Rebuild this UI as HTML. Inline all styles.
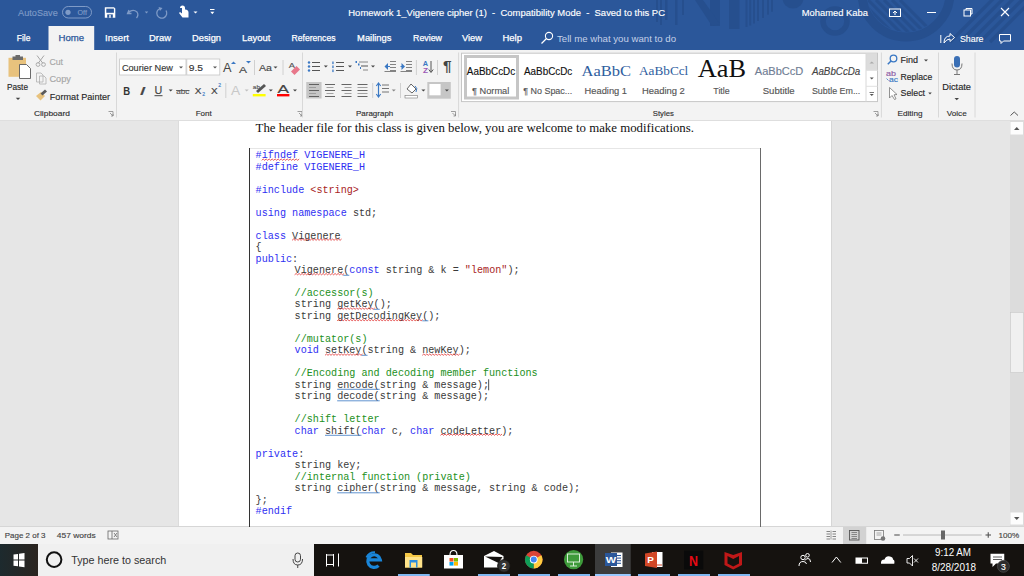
<!DOCTYPE html>
<html><head><meta charset="utf-8"><style>*{margin:0;padding:0}html,body{width:1024px;height:576px;overflow:hidden;background:#e6e6e6}svg{display:block}</style></head><body>
<svg width="1024" height="576" viewBox="0 0 1024 576">
<rect x="0" y="0" width="1024" height="50" fill="#2b579a" />
<rect x="0" y="50" width="1024" height="70" fill="#f3f3f3" />
<rect x="0" y="120" width="1024" height="407" fill="#e6e6e6" />
<rect x="179" y="120" width="652" height="407" fill="#ffffff" />
<rect x="0" y="120" width="1024" height="1" fill="#dedede" />
<rect x="0" y="526" width="1024" height="18" fill="#f3f3f3" />
<rect x="0" y="526" width="1024" height="1" fill="#d6d6d6" />
<rect x="0" y="544" width="1024" height="32" fill="#15120f" />
<rect x="656" y="0" width="2" height="22" fill="#264f8e" />
<rect x="660" y="0" width="2" height="25" fill="#264f8e" />
<rect x="665" y="0" width="2.5" height="20" fill="#264f8e" />
<rect x="675" y="0" width="2.5" height="25" fill="#264f8e" />
<rect x="682" y="0" width="2" height="15" fill="#264f8e" />
<rect x="710" y="0" width="10" height="26" fill="#264f8e" />
<rect x="729" y="0" width="10.5" height="29" fill="#264f8e" />
<rect x="745.5" y="0" width="2" height="27" fill="#264f8e" />
<rect x="749.2" y="0" width="2" height="25.5" fill="#264f8e" />
<rect x="753" y="0" width="2" height="23.5" fill="#264f8e" />
<rect x="757" y="0" width="2" height="21" fill="#264f8e" />
<rect x="762" y="0" width="2" height="18" fill="#264f8e" />
<rect x="767" y="0" width="2" height="14.6" fill="#264f8e" />
<rect x="771" y="0" width="2" height="11.7" fill="#264f8e" />
<path d="M695 0 L703 0 L720 24 L712 26 Z" fill="#264f8e" stroke="none" stroke-width="1" />
<circle cx="793" cy="-2" r="10.5" fill="#264f8e"/>
<circle cx="835" cy="21" r="12" fill="none" stroke="#264f8e" stroke-width="5.5"/>
<defs><clipPath id="ic"><circle cx="906" cy="-7" r="39"/></clipPath></defs>
<circle cx="906" cy="-7" r="44" fill="none" stroke="#264f8e" stroke-width="9"/>
<g clip-path="url(#ic)">
<line x1="860" y1="0" x2="900" y2="40" stroke="#264f8e" stroke-width="3" />
<line x1="868" y1="0" x2="908" y2="40" stroke="#264f8e" stroke-width="3" />
<line x1="876" y1="0" x2="916" y2="40" stroke="#264f8e" stroke-width="3" />
<line x1="884" y1="0" x2="924" y2="40" stroke="#264f8e" stroke-width="3" />
<line x1="892" y1="0" x2="932" y2="40" stroke="#264f8e" stroke-width="3" />
<line x1="900" y1="0" x2="940" y2="40" stroke="#264f8e" stroke-width="3" />
</g>
<line x1="950" y1="42" x2="995" y2="-3" stroke="#264f8e" stroke-width="3.2" />
<line x1="960" y1="42" x2="1005" y2="-3" stroke="#264f8e" stroke-width="3.2" />
<line x1="970" y1="42" x2="1015" y2="-3" stroke="#264f8e" stroke-width="3.2" />
<line x1="980" y1="42" x2="1025" y2="-3" stroke="#264f8e" stroke-width="3.2" />
<line x1="990" y1="42" x2="1035" y2="-3" stroke="#264f8e" stroke-width="3.2" />
<text x="18.10" y="15.80" font-family="Liberation Sans" font-size="9.29" fill="#7f9bc7" stroke="#7f9bc7" stroke-width="0.14" font-weight="normal" font-style="normal" textLength="39.70" lengthAdjust="spacingAndGlyphs" xml:space="preserve">AutoSave</text>
<rect x="62.5" y="6.5" width="29" height="11.5" rx="5.75" fill="none" stroke="#7f9bc7" stroke-width="1"/>
<circle cx="68" cy="12.3" r="2.6" fill="#7f9bc7"/>
<text x="77.60" y="14.80" font-family="Liberation Sans" font-size="6.57" fill="#7f9bc7" stroke="#7f9bc7" stroke-width="0.14" font-weight="normal" font-style="normal" textLength="9.30" lengthAdjust="spacingAndGlyphs" xml:space="preserve">Off</text>
<path d="M104.8 7.3 H114 L115.3 8.6 V17.8 H104.8 Z" fill="#fff" stroke="none" stroke-width="1" />
<rect x="106.3" y="8.6" width="7.6" height="4.2" fill="#2b579a" />
<rect x="107.2" y="14.4" width="5.6" height="3.4" fill="#2b579a" />
<rect x="109.3" y="14.9" width="1.4" height="2.9" fill="#fff" />
<path d="M129 10 L127.5 13.5 L131.5 13.5 M128.5 12.5 Q133 8.5 137 12 Q139 15 136.5 18" fill="none" stroke="#7f9bc7" stroke-width="1.3" />
<path d="M144.75 11.5 L148.25 11.5 L146.5 13.5 Z" fill="#7f9bc7" stroke="none" stroke-width="1" />
<path d="M166 10.5 A5 5 0 1 1 160 8.5" fill="none" stroke="#7f9bc7" stroke-width="1.3"/>
<path d="M158.5 7 L162.5 8 L160 11 Z" fill="#7f9bc7" stroke="none" stroke-width="1" />
<path d="M180 8 a2.5 2.5 0 0 1 5 0 v1.5 a3 3 0 0 1 3.5 3 v5 h-6 l-3.5 -4.5 l1 -1 l2 1.5 v-5.5" fill="#fff" stroke="none" stroke-width="1" />
<path d="M193.5 11.5 L197.5 11.5 L195.5 13.5 Z" fill="#fff" stroke="none" stroke-width="1" />
<rect x="210" y="9" width="4.5" height="1" fill="#fff" />
<path d="M210.3 11.75 L214.3 11.75 L212.3 14.25 Z" fill="#fff" stroke="none" stroke-width="1" />
<text x="348.30" y="15.80" font-family="Liberation Sans" font-size="9.29" fill="#fff" stroke="#fff" stroke-width="0.14" font-weight="normal" font-style="normal" textLength="316.70" lengthAdjust="spacingAndGlyphs" xml:space="preserve">Homework 1_Vigenere cipher (1)  -  Compatibility Mode  -  Saved to this PC</text>
<text x="801.80" y="15.80" font-family="Liberation Sans" font-size="9.29" fill="#fff" stroke="#fff" stroke-width="0.14" font-weight="normal" font-style="normal" textLength="66.20" lengthAdjust="spacingAndGlyphs" xml:space="preserve">Mohamed Kaba</text>
<rect x="889.5" y="9" width="11" height="7.5" fill="none" stroke="#fff" stroke-width="1"/>
<path d="M895 15 V11 M893 13 L895 11 L897 13" fill="none" stroke="#fff" stroke-width="1" />
<rect x="927" y="12" width="9" height="1" fill="#fff" />
<rect x="964" y="10" width="6.5" height="6" fill="none" stroke="#fff" stroke-width="1"/>
<path d="M966 10 V8.5 H972 V14 H970.5" fill="none" stroke="#fff" stroke-width="1" />
<path d="M1001 8 L1009 16 M1009 8 L1001 16" fill="none" stroke="#fff" stroke-width="1.1" />
<rect x="48.5" y="26" width="45.7" height="24" fill="#f3f3f3" />
<text x="16.80" y="40.80" font-family="Liberation Sans" font-size="9.43" fill="#ffffff" stroke="#ffffff" stroke-width="0.25" font-weight="normal" font-style="normal" textLength="13.50" lengthAdjust="spacingAndGlyphs" xml:space="preserve">File</text>
<text x="58.60" y="40.80" font-family="Liberation Sans" font-size="9.43" fill="#2b579a" stroke="#2b579a" stroke-width="0.25" font-weight="normal" font-style="normal" textLength="25.60" lengthAdjust="spacingAndGlyphs" xml:space="preserve">Home</text>
<text x="105.00" y="40.80" font-family="Liberation Sans" font-size="9.43" fill="#ffffff" stroke="#ffffff" stroke-width="0.25" font-weight="normal" font-style="normal" textLength="24.00" lengthAdjust="spacingAndGlyphs" xml:space="preserve">Insert</text>
<text x="149.00" y="40.80" font-family="Liberation Sans" font-size="9.43" fill="#ffffff" stroke="#ffffff" stroke-width="0.25" font-weight="normal" font-style="normal" textLength="22.00" lengthAdjust="spacingAndGlyphs" xml:space="preserve">Draw</text>
<text x="192.00" y="40.80" font-family="Liberation Sans" font-size="9.43" fill="#ffffff" stroke="#ffffff" stroke-width="0.25" font-weight="normal" font-style="normal" textLength="29.00" lengthAdjust="spacingAndGlyphs" xml:space="preserve">Design</text>
<text x="242.00" y="40.80" font-family="Liberation Sans" font-size="9.43" fill="#ffffff" stroke="#ffffff" stroke-width="0.25" font-weight="normal" font-style="normal" textLength="28.50" lengthAdjust="spacingAndGlyphs" xml:space="preserve">Layout</text>
<text x="291.50" y="40.80" font-family="Liberation Sans" font-size="9.43" fill="#ffffff" stroke="#ffffff" stroke-width="0.25" font-weight="normal" font-style="normal" textLength="44.00" lengthAdjust="spacingAndGlyphs" xml:space="preserve">References</text>
<text x="357.10" y="40.80" font-family="Liberation Sans" font-size="9.43" fill="#ffffff" stroke="#ffffff" stroke-width="0.25" font-weight="normal" font-style="normal" textLength="34.40" lengthAdjust="spacingAndGlyphs" xml:space="preserve">Mailings</text>
<text x="413.00" y="40.80" font-family="Liberation Sans" font-size="9.43" fill="#ffffff" stroke="#ffffff" stroke-width="0.25" font-weight="normal" font-style="normal" textLength="29.00" lengthAdjust="spacingAndGlyphs" xml:space="preserve">Review</text>
<text x="462.00" y="40.80" font-family="Liberation Sans" font-size="9.43" fill="#ffffff" stroke="#ffffff" stroke-width="0.25" font-weight="normal" font-style="normal" textLength="20.00" lengthAdjust="spacingAndGlyphs" xml:space="preserve">View</text>
<text x="502.50" y="40.80" font-family="Liberation Sans" font-size="9.43" fill="#ffffff" stroke="#ffffff" stroke-width="0.25" font-weight="normal" font-style="normal" textLength="19.50" lengthAdjust="spacingAndGlyphs" xml:space="preserve">Help</text>
<circle cx="549" cy="36" r="3.6" fill="none" stroke="#fff" stroke-width="1.1"/>
<line x1="546.5" y1="38.5" x2="541.5" y2="43.5" stroke="#fff" stroke-width="1.3" />
<text x="557.00" y="41.50" font-family="Liberation Sans" font-size="9.43" fill="#c5d1e8" font-weight="normal" font-style="normal" textLength="119.00" lengthAdjust="spacingAndGlyphs" xml:space="preserve">Tell me what you want to do</text>
<path d="M940.8 35 V43" fill="none" stroke="#fff" stroke-width="1" />
<path d="M944 43 Q944 36 950 36 V33.5 L954.5 37.5 L950 41.5 V39 Q946.5 39 944 43 Z" fill="none" stroke="#fff" stroke-width="1" />
<text x="960.00" y="41.50" font-family="Liberation Sans" font-size="9.43" fill="#fff" stroke="#fff" stroke-width="0.14" font-weight="normal" font-style="normal" textLength="23.50" lengthAdjust="spacingAndGlyphs" xml:space="preserve">Share</text>
<path d="M999.5 34.5 H1010.5 V41 H1003.5 L1001 43.5 V41 H999.5 Z" fill="none" stroke="#fff" stroke-width="1" />
<rect x="8.5" y="57.8" width="17.5" height="19" fill="#e8c27d" />
<rect x="12.5" y="56.5" width="10.5" height="3.5" fill="#6b6b6b" />
<rect x="15.5" y="55" width="4.5" height="2.5" fill="#6b6b6b" />
<path d="M19.5 64.5 H26.5 L30.5 68.5 V78.5 H19.5 Z" fill="#fff" stroke="#5a5a5a" stroke-width="0.9" />
<text x="6.90" y="89.80" font-family="Liberation Sans" font-size="9.00" fill="#262626" stroke="#262626" stroke-width="0.14" font-weight="normal" font-style="normal" textLength="21.10" lengthAdjust="spacingAndGlyphs" xml:space="preserve">Paste</text>
<path d="M15.75 97.7 L20.25 97.7 L18 99.89999999999999 Z" fill="#444" stroke="none" stroke-width="1" />
<path d="M37 55.5 L43 63.5 M44 55.5 L38 63.5" fill="none" stroke="#a6a6a6" stroke-width="1" />
<circle cx="38" cy="64.5" r="1.9" fill="none" stroke="#a6a6a6" stroke-width="0.9"/><circle cx="43.5" cy="64.5" r="1.9" fill="none" stroke="#a6a6a6" stroke-width="0.9"/>
<text x="49.40" y="64.80" font-family="Liberation Sans" font-size="8.71" fill="#a6a6a6" stroke="#a6a6a6" stroke-width="0.14" font-weight="normal" font-style="normal" textLength="13.60" lengthAdjust="spacingAndGlyphs" xml:space="preserve">Cut</text>
<path d="M36.5 73 H41 L43 75 V82 H36.5 Z M39.5 76 H44 L46 78 V84 H39.5 Z" fill="#f3f3f3" stroke="#b0b0b0" stroke-width="0.8" />
<text x="49.40" y="82.20" font-family="Liberation Sans" font-size="8.71" fill="#a6a6a6" stroke="#a6a6a6" stroke-width="0.14" font-weight="normal" font-style="normal" textLength="21.60" lengthAdjust="spacingAndGlyphs" xml:space="preserve">Copy</text>
<path d="M36 96 L41 92 L45 96 L40.5 100.5 Z" fill="#e8c27d" stroke="none" stroke-width="1" />
<path d="M40.5 93.5 L45 89.5 L47 91.5 L42.5 95.5 Z" fill="#5b5b5b" stroke="none" stroke-width="1" />
<text x="49.80" y="99.80" font-family="Liberation Sans" font-size="9.71" fill="#262626" stroke="#262626" stroke-width="0.14" font-weight="normal" font-style="normal" textLength="60.30" lengthAdjust="spacingAndGlyphs" xml:space="preserve">Format Painter</text>
<text x="33.90" y="116.00" font-family="Liberation Sans" font-size="8.00" fill="#303030" stroke="#303030" stroke-width="0.14" font-weight="normal" font-style="normal" textLength="36.10" lengthAdjust="spacingAndGlyphs" xml:space="preserve">Clipboard</text>
<path d="M108.5 111.5 H113.0 V116.0 M110.0 113.0 L113.0 116.0 M111.0 116.0 H113.0 V114.0" fill="none" stroke="#888" stroke-width="0.8" />
<line x1="116.5" y1="52.5" x2="116.5" y2="117.5" stroke="#d8d8d8" stroke-width="1" />
<rect x="119.6" y="59" width="66.4" height="16" fill="#fff" stroke="#c6c6c6" stroke-width="0.8"/>
<rect x="186.8" y="59" width="33" height="16" fill="#fff" stroke="#c6c6c6" stroke-width="0.8"/>
<text x="121.90" y="71.20" font-family="Liberation Sans" font-size="9.57" fill="#333" stroke="#333" stroke-width="0.14" font-weight="normal" font-style="normal" textLength="51.00" lengthAdjust="spacingAndGlyphs" xml:space="preserve">Courier New</text>
<path d="M179.0 66.5 L183.0 66.5 L181 68.5 Z" fill="#555" stroke="none" stroke-width="1" />
<text x="188.70" y="71.20" font-family="Liberation Sans" font-size="9.57" fill="#333" stroke="#333" stroke-width="0.14" font-weight="normal" font-style="normal" textLength="14.30" lengthAdjust="spacingAndGlyphs" xml:space="preserve">9.5</text>
<path d="M213.0 66.5 L217.0 66.5 L215 68.5 Z" fill="#555" stroke="none" stroke-width="1" />
<text x="223.00" y="72.00" font-family="Liberation Sans" font-size="12.14" fill="#444" font-weight="normal" font-style="normal" textLength="8.50" lengthAdjust="spacingAndGlyphs" xml:space="preserve">A</text>
<path d="M231 64 L233.5 61.5 L236 64 Z" fill="#3a78c4" stroke="none" stroke-width="1" />
<text x="239.00" y="72.50" font-family="Liberation Sans" font-size="9.71" fill="#444" stroke="#444" stroke-width="0.14" font-weight="normal" font-style="normal" textLength="8.00" lengthAdjust="spacingAndGlyphs" xml:space="preserve">A</text>
<path d="M246 61 L248.5 63.5 L251 61 Z" fill="#3a78c4" stroke="none" stroke-width="1" />
<line x1="254.5" y1="60" x2="254.5" y2="75" stroke="#d0d0d0" stroke-width="1" />
<text x="259.00" y="71.20" font-family="Liberation Sans" font-size="9.71" fill="#444" stroke="#444" stroke-width="0.14" font-weight="normal" font-style="normal" textLength="13.00" lengthAdjust="spacingAndGlyphs" xml:space="preserve">Aa</text>
<path d="M273.5 66.5 L277.5 66.5 L275.5 68.5 Z" fill="#444" stroke="none" stroke-width="1" />
<line x1="283" y1="60" x2="283" y2="75" stroke="#d0d0d0" stroke-width="1" />
<text x="288.80" y="68.00" font-family="Liberation Sans" font-size="7.86" fill="#555" stroke="#555" stroke-width="0.14" font-weight="normal" font-style="normal" textLength="6.20" lengthAdjust="spacingAndGlyphs" xml:space="preserve">A</text>
<path d="M291 71.5 L296.5 66 L300 69.5 L294.5 75 Z" fill="#e8778a" stroke="none" stroke-width="1" />
<text x="123.30" y="94.50" font-family="Liberation Sans" font-size="10.00" fill="#333" font-weight="bold" font-style="normal" textLength="6.90" lengthAdjust="spacingAndGlyphs" xml:space="preserve">B</text>
<text x="139.50" y="94.50" font-family="Liberation Sans" font-size="10.00" fill="#444" stroke="#444" stroke-width="0.14" font-weight="normal" font-style="italic" textLength="6.10" lengthAdjust="spacingAndGlyphs" xml:space="preserve">I</text>
<text x="154.50" y="93.50" font-family="Liberation Sans" font-size="10.00" fill="#444" stroke="#444" stroke-width="0.14" font-weight="normal" font-style="normal" textLength="7.80" lengthAdjust="spacingAndGlyphs" xml:space="preserve">U</text>
<line x1="154.5" y1="95.7" x2="162.5" y2="95.7" stroke="#444" stroke-width="1" />
<path d="M168.7 89.5 L172.7 89.5 L170.7 91.5 Z" fill="#444" stroke="none" stroke-width="1" />
<text x="176.20" y="94.00" font-family="Liberation Sans" font-size="7.86" fill="#555" stroke="#555" stroke-width="0.14" font-weight="normal" font-style="normal" textLength="13.00" lengthAdjust="spacingAndGlyphs" xml:space="preserve">abc</text>
<line x1="176" y1="90.5" x2="189.5" y2="90.5" stroke="#555" stroke-width="0.8" />
<text x="194.80" y="93.50" font-family="Liberation Sans" font-size="9.00" fill="#444" stroke="#444" stroke-width="0.14" font-weight="normal" font-style="normal" textLength="6.70" lengthAdjust="spacingAndGlyphs" xml:space="preserve">X</text>
<text x="202.20" y="96.30" font-family="Liberation Sans" font-size="4.57" fill="#3a78c4" stroke="#3a78c4" stroke-width="0.14" font-weight="normal" font-style="normal" textLength="2.80" lengthAdjust="spacingAndGlyphs" xml:space="preserve">2</text>
<text x="211.00" y="93.50" font-family="Liberation Sans" font-size="9.00" fill="#444" stroke="#444" stroke-width="0.14" font-weight="normal" font-style="normal" textLength="6.70" lengthAdjust="spacingAndGlyphs" xml:space="preserve">X</text>
<text x="218.20" y="87.00" font-family="Liberation Sans" font-size="4.57" fill="#3a78c4" stroke="#3a78c4" stroke-width="0.14" font-weight="normal" font-style="normal" textLength="2.80" lengthAdjust="spacingAndGlyphs" xml:space="preserve">2</text>
<line x1="225.8" y1="83" x2="225.8" y2="98" stroke="#d0d0d0" stroke-width="1" />
<text x="231.00" y="94.50" font-family="Liberation Sans" font-size="11.86" fill="#c8c8c8" font-weight="normal" font-style="normal" textLength="9.20" lengthAdjust="spacingAndGlyphs" xml:space="preserve">A</text>
<path d="M244.7 89.5 L248.7 89.5 L246.7 91.5 Z" fill="#c0c0c0" stroke="none" stroke-width="1" />
<text x="252.80" y="89.00" font-family="Liberation Sans" font-size="5.71" fill="#555" stroke="#555" stroke-width="0.14" font-weight="normal" font-style="normal" textLength="7.20" lengthAdjust="spacingAndGlyphs" xml:space="preserve">ab</text>
<path d="M256 91 L264 84 L266 86 L258 93 Z" fill="#555" stroke="none" stroke-width="1" />
<rect x="252.8" y="94" width="12.8" height="2.4" fill="#ffff00" />
<path d="M268.8 89.5 L272.8 89.5 L270.8 91.5 Z" fill="#444" stroke="none" stroke-width="1" />
<text x="277.50" y="93.00" font-family="Liberation Sans" font-size="10.71" fill="#444" stroke="#444" stroke-width="0.14" font-weight="normal" font-style="normal" textLength="11.50" lengthAdjust="spacingAndGlyphs" xml:space="preserve">A</text>
<rect x="277" y="94" width="12.4" height="2.4" fill="#ff0000" />
<path d="M293.0 89.5 L297.0 89.5 L295 91.5 Z" fill="#444" stroke="none" stroke-width="1" />
<text x="195.70" y="116.00" font-family="Liberation Sans" font-size="8.00" fill="#303030" stroke="#303030" stroke-width="0.14" font-weight="normal" font-style="normal" textLength="16.10" lengthAdjust="spacingAndGlyphs" xml:space="preserve">Font</text>
<path d="M297.5 111.5 H302.0 V116.0 M299.0 113.0 L302.0 116.0 M300.0 116.0 H302.0 V114.0" fill="none" stroke="#888" stroke-width="0.8" />
<line x1="302.5" y1="52.5" x2="302.5" y2="117.5" stroke="#d8d8d8" stroke-width="1" />
<circle cx="309" cy="62.5" r="1.2" fill="#3a78c4"/>
<circle cx="309" cy="66.5" r="1.2" fill="#3a78c4"/>
<circle cx="309" cy="70.5" r="1.2" fill="#3a78c4"/>
<line x1="312" y1="62.5" x2="320" y2="62.5" stroke="#555" stroke-width="1" />
<line x1="312" y1="66.5" x2="320" y2="66.5" stroke="#555" stroke-width="1" />
<line x1="312" y1="70.5" x2="320" y2="70.5" stroke="#555" stroke-width="1" />
<path d="M323.8 65.5 L327.8 65.5 L325.8 67.5 Z" fill="#444" stroke="none" stroke-width="1" />
<rect x="332.3" y="61.5" width="1.3" height="2.6" fill="#3a78c4" />
<rect x="332.3" y="65.5" width="1.3" height="2.6" fill="#3a78c4" />
<rect x="332.3" y="69.5" width="1.3" height="2.6" fill="#3a78c4" />
<line x1="336" y1="62.5" x2="344" y2="62.5" stroke="#555" stroke-width="1" />
<line x1="336" y1="66.5" x2="344" y2="66.5" stroke="#555" stroke-width="1" />
<line x1="336" y1="70.5" x2="344" y2="70.5" stroke="#555" stroke-width="1" />
<path d="M348.0 65.5 L352.0 65.5 L350 67.5 Z" fill="#444" stroke="none" stroke-width="1" />
<rect x="355.5" y="61" width="1.5" height="2" fill="#3a78c4" />
<rect x="358" y="63.5" width="1.5" height="2" fill="#3a78c4" />
<rect x="360" y="67" width="1" height="2" fill="#3a78c4" />
<line x1="359" y1="62" x2="368" y2="62" stroke="#888" stroke-width="1" />
<line x1="361" y1="66" x2="368" y2="66" stroke="#555" stroke-width="1" />
<line x1="363" y1="70" x2="368" y2="70" stroke="#888" stroke-width="1" />
<path d="M371.0 65.5 L375.0 65.5 L373 67.5 Z" fill="#444" stroke="none" stroke-width="1" />
<path d="M384.5 66.5 L388 63 V70 Z" fill="#3a78c4" stroke="none" stroke-width="1" />
<line x1="386" y1="66.5" x2="390" y2="66.5" stroke="#3a78c4" stroke-width="1" />
<line x1="390" y1="61.5" x2="396" y2="61.5" stroke="#666" stroke-width="0.8" />
<line x1="390" y1="64.5" x2="396" y2="64.5" stroke="#666" stroke-width="0.8" />
<line x1="390" y1="67.5" x2="396" y2="67.5" stroke="#666" stroke-width="0.8" />
<line x1="390" y1="70.5" x2="396" y2="70.5" stroke="#666" stroke-width="0.8" />
<line x1="384.5" y1="71.5" x2="396" y2="71.5" stroke="#666" stroke-width="0.8" />
<path d="M405 66.5 L401.5 63 V70 Z" fill="#3a78c4" stroke="none" stroke-width="1" />
<line x1="400.5" y1="66.5" x2="403" y2="66.5" stroke="#3a78c4" stroke-width="1" />
<line x1="406" y1="61.5" x2="412" y2="61.5" stroke="#666" stroke-width="0.8" />
<line x1="406" y1="64.5" x2="412" y2="64.5" stroke="#666" stroke-width="0.8" />
<line x1="406" y1="67.5" x2="412" y2="67.5" stroke="#666" stroke-width="0.8" />
<line x1="406" y1="70.5" x2="412" y2="70.5" stroke="#666" stroke-width="0.8" />
<line x1="400.5" y1="71.5" x2="412" y2="71.5" stroke="#666" stroke-width="0.8" />
<line x1="416.4" y1="60" x2="416.4" y2="75" stroke="#d0d0d0" stroke-width="1" />
<text x="422.70" y="66.00" font-family="Liberation Sans" font-size="6.29" fill="#3a78c4" font-weight="bold" font-style="normal" textLength="5.30" lengthAdjust="spacingAndGlyphs" xml:space="preserve">A</text>
<text x="423.00" y="72.50" font-family="Liberation Sans" font-size="6.29" fill="#9b59b6" font-weight="bold" font-style="normal" textLength="5.00" lengthAdjust="spacingAndGlyphs" xml:space="preserve">Z</text>
<line x1="431" y1="61" x2="431" y2="72" stroke="#555" stroke-width="1" />
<path d="M428.8 69.5 L431 72.5 L433.2 69.5" fill="none" stroke="#555" stroke-width="1" />
<line x1="437.5" y1="60" x2="437.5" y2="75" stroke="#d0d0d0" stroke-width="1" />
<text x="443.00" y="70.80" font-family="Liberation Sans" font-size="14.00" fill="#444" font-weight="bold" font-style="normal" textLength="8.60" lengthAdjust="spacingAndGlyphs" xml:space="preserve">¶</text>
<rect x="306.25" y="82" width="15.3" height="16.5" fill="#c6c6c6" />
<line x1="309" y1="84.5" x2="319" y2="84.5" stroke="#555" stroke-width="0.9" />
<line x1="309" y1="87.5" x2="316" y2="87.5" stroke="#999" stroke-width="0.9" />
<line x1="309" y1="90.5" x2="319" y2="90.5" stroke="#555" stroke-width="0.9" />
<line x1="309" y1="93.5" x2="316" y2="93.5" stroke="#999" stroke-width="0.9" />
<line x1="309" y1="96.5" x2="319" y2="96.5" stroke="#555" stroke-width="0.9" />
<line x1="325.0" y1="84.5" x2="335.0" y2="84.5" stroke="#555" stroke-width="0.9" />
<line x1="326.5" y1="87.5" x2="333.5" y2="87.5" stroke="#999" stroke-width="0.9" />
<line x1="325.0" y1="90.5" x2="335.0" y2="90.5" stroke="#555" stroke-width="0.9" />
<line x1="326.5" y1="93.5" x2="333.5" y2="93.5" stroke="#999" stroke-width="0.9" />
<line x1="325.0" y1="96.5" x2="335.0" y2="96.5" stroke="#555" stroke-width="0.9" />
<line x1="341.5" y1="84.5" x2="351.5" y2="84.5" stroke="#555" stroke-width="0.9" />
<line x1="344.5" y1="87.5" x2="351.5" y2="87.5" stroke="#999" stroke-width="0.9" />
<line x1="341.5" y1="90.5" x2="351.5" y2="90.5" stroke="#555" stroke-width="0.9" />
<line x1="344.5" y1="93.5" x2="351.5" y2="93.5" stroke="#999" stroke-width="0.9" />
<line x1="341.5" y1="96.5" x2="351.5" y2="96.5" stroke="#555" stroke-width="0.9" />
<line x1="357.5" y1="84.5" x2="367.5" y2="84.5" stroke="#555" stroke-width="0.9" />
<line x1="357.5" y1="87.5" x2="367.5" y2="87.5" stroke="#999" stroke-width="0.9" />
<line x1="357.5" y1="90.5" x2="367.5" y2="90.5" stroke="#555" stroke-width="0.9" />
<line x1="357.5" y1="93.5" x2="367.5" y2="93.5" stroke="#999" stroke-width="0.9" />
<line x1="357.5" y1="96.5" x2="367.5" y2="96.5" stroke="#555" stroke-width="0.9" />
<line x1="372.7" y1="83" x2="372.7" y2="98" stroke="#d0d0d0" stroke-width="1" />
<line x1="378.5" y1="84" x2="378.5" y2="96" stroke="#3a78c4" stroke-width="1.2" />
<path d="M376.3 86 L378.5 83 L380.7 86 M376.3 94 L378.5 97 L380.7 94" fill="none" stroke="#3a78c4" stroke-width="1.1" />
<line x1="382" y1="85.0" x2="389" y2="85.0" stroke="#666" stroke-width="0.9" />
<line x1="382" y1="88.5" x2="389" y2="88.5" stroke="#666" stroke-width="0.9" />
<line x1="382" y1="92.0" x2="389" y2="92.0" stroke="#666" stroke-width="0.9" />
<path d="M391.75 89.5 L395.75 89.5 L393.75 91.5 Z" fill="#888" stroke="none" stroke-width="1" />
<line x1="400.5" y1="83" x2="400.5" y2="98" stroke="#d0d0d0" stroke-width="1" />
<path d="M407 89 L411 84 L416 89 L412 93 Z" fill="#fff" stroke="#555" stroke-width="0.9" />
<path d="M415 86 Q418 88 416 92" fill="none" stroke="#3a78c4" stroke-width="1" />
<rect x="405" y="95.5" width="12.5" height="2.5" fill="#fff" stroke="#777" stroke-width="0.6"/>
<path d="M421.4 89.5 L425.4 89.5 L423.4 91.5 Z" fill="#444" stroke="none" stroke-width="1" />
<rect x="427.3" y="82" width="23.5" height="16.7" fill="#c6c6c6" />
<rect x="429.4" y="84" width="11.2" height="11.3" fill="#fff" />
<path d="M444.9 89.5 L448.9 89.5 L446.9 91.5 Z" fill="#444" stroke="none" stroke-width="1" />
<text x="356.00" y="116.00" font-family="Liberation Sans" font-size="8.00" fill="#303030" stroke="#303030" stroke-width="0.14" font-weight="normal" font-style="normal" textLength="37.30" lengthAdjust="spacingAndGlyphs" xml:space="preserve">Paragraph</text>
<path d="M451 111.5 H455.5 V116.0 M452.5 113.0 L455.5 116.0 M453.5 116.0 H455.5 V114.0" fill="none" stroke="#888" stroke-width="0.8" />
<line x1="458.6" y1="52.5" x2="458.6" y2="117.5" stroke="#d8d8d8" stroke-width="1" />
<rect x="461.5" y="53.2" width="416" height="48.4" fill="#fff" stroke="#c6c6c6" stroke-width="1"/>
<rect x="465.5" y="56.5" width="52" height="41.5" fill="none" stroke="#c6c6c6" stroke-width="3"/>
<rect x="866" y="53.7" width="11" height="16.6" fill="#dcdcdc" />
<line x1="866" y1="53.2" x2="866" y2="101.6" stroke="#d8d8d8" stroke-width="1" />
<line x1="866" y1="70.3" x2="877.5" y2="70.3" stroke="#e0e0e0" stroke-width="1" />
<line x1="866" y1="86.3" x2="877.5" y2="86.3" stroke="#e0e0e0" stroke-width="1" />
<path d="M869.5 63.5 L871.75 61.5 L874 63.5 Z" fill="#aaa" stroke="none" stroke-width="1" />
<path d="M869.75 77.5 L873.75 77.5 L871.75 79.5 Z" fill="#555" stroke="none" stroke-width="1" />
<line x1="869.5" y1="92.5" x2="874" y2="92.5" stroke="#555" stroke-width="0.8" />
<path d="M869.75 94.0 L873.75 94.0 L871.75 96.0 Z" fill="#555" stroke="none" stroke-width="1" />
<text x="466.80" y="75.00" font-family="Liberation Sans" font-size="10.86" fill="#111" stroke="#111" stroke-width="0.14" font-weight="normal" font-style="normal" textLength="48.40" lengthAdjust="spacingAndGlyphs" xml:space="preserve">AaBbCcDc</text>
<text x="472.00" y="93.50" font-family="Liberation Sans" font-size="9.00" fill="#555" stroke="#555" stroke-width="0.14" font-weight="normal" font-style="normal" textLength="37.30" lengthAdjust="spacingAndGlyphs" xml:space="preserve">¶ Normal</text>
<text x="524.00" y="75.00" font-family="Liberation Sans" font-size="10.86" fill="#111" stroke="#111" stroke-width="0.14" font-weight="normal" font-style="normal" textLength="48.30" lengthAdjust="spacingAndGlyphs" xml:space="preserve">AaBbCcDc</text>
<text x="523.20" y="93.50" font-family="Liberation Sans" font-size="9.00" fill="#555" stroke="#555" stroke-width="0.14" font-weight="normal" font-style="normal" textLength="49.10" lengthAdjust="spacingAndGlyphs" xml:space="preserve">¶ No Spac...</text>
<text x="581.50" y="75.50" font-family="Liberation Serif" font-size="14.50" fill="#2e5d9e" font-weight="normal" font-style="normal" textLength="49.50" lengthAdjust="spacingAndGlyphs" xml:space="preserve">AaBbC</text>
<text x="584.60" y="93.50" font-family="Liberation Sans" font-size="9.00" fill="#555" stroke="#555" stroke-width="0.14" font-weight="normal" font-style="normal" textLength="42.40" lengthAdjust="spacingAndGlyphs" xml:space="preserve">Heading 1</text>
<text x="639.00" y="75.00" font-family="Liberation Serif" font-size="11.45" fill="#2e5d9e" font-weight="normal" font-style="normal" textLength="49.30" lengthAdjust="spacingAndGlyphs" xml:space="preserve">AaBbCcl</text>
<text x="641.90" y="93.50" font-family="Liberation Sans" font-size="9.00" fill="#555" stroke="#555" stroke-width="0.14" font-weight="normal" font-style="normal" textLength="42.90" lengthAdjust="spacingAndGlyphs" xml:space="preserve">Heading 2</text>
<text x="697.70" y="76.60" font-family="Liberation Serif" font-size="25.95" fill="#111" font-weight="normal" font-style="normal" textLength="48.30" lengthAdjust="spacingAndGlyphs" xml:space="preserve">AaB</text>
<text x="713.30" y="93.50" font-family="Liberation Sans" font-size="9.00" fill="#555" stroke="#555" stroke-width="0.14" font-weight="normal" font-style="normal" textLength="16.40" lengthAdjust="spacingAndGlyphs" xml:space="preserve">Title</text>
<text x="754.80" y="75.00" font-family="Liberation Sans" font-size="10.57" fill="#6f7d94" stroke="#6f7d94" stroke-width="0.14" font-weight="normal" font-style="normal" textLength="48.50" lengthAdjust="spacingAndGlyphs" xml:space="preserve">AaBbCcD</text>
<text x="762.70" y="93.50" font-family="Liberation Sans" font-size="9.00" fill="#555" stroke="#555" stroke-width="0.14" font-weight="normal" font-style="normal" textLength="32.00" lengthAdjust="spacingAndGlyphs" xml:space="preserve">Subtitle</text>
<text x="811.90" y="75.00" font-family="Liberation Sans" font-size="10.57" fill="#444" stroke="#444" stroke-width="0.14" font-weight="normal" font-style="italic" textLength="48.40" lengthAdjust="spacingAndGlyphs" xml:space="preserve">AaBbCcDa</text>
<text x="811.90" y="93.50" font-family="Liberation Sans" font-size="9.00" fill="#555" stroke="#555" stroke-width="0.14" font-weight="normal" font-style="normal" textLength="48.40" lengthAdjust="spacingAndGlyphs" xml:space="preserve">Subtle Em...</text>
<text x="652.80" y="116.00" font-family="Liberation Sans" font-size="8.00" fill="#303030" stroke="#303030" stroke-width="0.14" font-weight="normal" font-style="normal" textLength="21.10" lengthAdjust="spacingAndGlyphs" xml:space="preserve">Styles</text>
<path d="M873.5 111.5 H878.0 V116.0 M875.0 113.0 L878.0 116.0 M876.0 116.0 H878.0 V114.0" fill="none" stroke="#888" stroke-width="0.8" />
<line x1="881.4" y1="52.5" x2="881.4" y2="117.5" stroke="#d8d8d8" stroke-width="1" />
<circle cx="893.5" cy="58.5" r="3.3" fill="none" stroke="#3a78c4" stroke-width="1.3"/>
<line x1="891" y1="61" x2="887.8" y2="64.3" stroke="#3a78c4" stroke-width="1.5" />
<text x="900.50" y="63.00" font-family="Liberation Sans" font-size="8.71" fill="#262626" stroke="#262626" stroke-width="0.14" font-weight="normal" font-style="normal" textLength="17.50" lengthAdjust="spacingAndGlyphs" xml:space="preserve">Find</text>
<path d="M924.0 59.5 L928.0 59.5 L926 61.5 Z" fill="#444" stroke="none" stroke-width="1" />
<text x="886.00" y="76.00" font-family="Liberation Sans" font-size="6.43" fill="#8e5fa8" stroke="#8e5fa8" stroke-width="0.14" font-weight="normal" font-style="normal" textLength="10.00" lengthAdjust="spacingAndGlyphs" xml:space="preserve">ab</text>
<text x="889.00" y="82.00" font-family="Liberation Sans" font-size="6.43" fill="#3a78c4" stroke="#3a78c4" stroke-width="0.14" font-weight="normal" font-style="normal" textLength="9.00" lengthAdjust="spacingAndGlyphs" xml:space="preserve">ac</text>
<path d="M886.5 78.5 L888.5 80.5" fill="none" stroke="#3a78c4" stroke-width="0.8" />
<text x="900.50" y="79.80" font-family="Liberation Sans" font-size="8.71" fill="#262626" stroke="#262626" stroke-width="0.14" font-weight="normal" font-style="normal" textLength="31.75" lengthAdjust="spacingAndGlyphs" xml:space="preserve">Replace</text>
<path d="M889.5 87.5 V98 L892 95.5 L894.5 99.5 L896 98.8 L894 94.8 L897 94.5 Z" fill="#fff" stroke="#777" stroke-width="0.8" />
<text x="900.50" y="96.30" font-family="Liberation Sans" font-size="8.71" fill="#262626" stroke="#262626" stroke-width="0.14" font-weight="normal" font-style="normal" textLength="24.50" lengthAdjust="spacingAndGlyphs" xml:space="preserve">Select</text>
<path d="M928.25 92.6 L931.75 92.6 L930 94.4 Z" fill="#444" stroke="none" stroke-width="1" />
<text x="897.50" y="116.00" font-family="Liberation Sans" font-size="8.00" fill="#303030" stroke="#303030" stroke-width="0.14" font-weight="normal" font-style="normal" textLength="25.00" lengthAdjust="spacingAndGlyphs" xml:space="preserve">Editing</text>
<line x1="938.5" y1="52.5" x2="938.5" y2="117.5" stroke="#d8d8d8" stroke-width="1" />
<rect x="954" y="56" width="6" height="11.5" rx="3" fill="#3a6fb5"/>
<path d="M952 63.5 Q952 70 957 70 Q962 70 962 63.5 M957 70 V74 M954 74.5 H960" fill="none" stroke="#777" stroke-width="1" />
<text x="942.25" y="89.80" font-family="Liberation Sans" font-size="9.00" fill="#262626" stroke="#262626" stroke-width="0.14" font-weight="normal" font-style="normal" textLength="28.75" lengthAdjust="spacingAndGlyphs" xml:space="preserve">Dictate</text>
<path d="M954.5 98.10000000000001 L959.0 98.10000000000001 L956.75 100.3 Z" fill="#444" stroke="none" stroke-width="1" />
<text x="946.75" y="116.00" font-family="Liberation Sans" font-size="8.00" fill="#303030" stroke="#303030" stroke-width="0.14" font-weight="normal" font-style="normal" textLength="20.00" lengthAdjust="spacingAndGlyphs" xml:space="preserve">Voice</text>
<line x1="975" y1="52.5" x2="975" y2="117.5" stroke="#d8d8d8" stroke-width="1" />
<path d="M1010.5 115.5 L1014.25 112 L1018 115.5" fill="none" stroke="#555" stroke-width="1" />
<text x="255.60" y="131.90" font-family="Liberation Serif" font-size="12.67" fill="#111" font-weight="normal" font-style="normal" textLength="438.40" lengthAdjust="spacingAndGlyphs" xml:space="preserve">The header file for this class is given below, you are welcome to make modifications.</text>
<line x1="249.5" y1="148" x2="249.5" y2="527" stroke="#333" stroke-width="1" />
<line x1="760.5" y1="148" x2="760.5" y2="527" stroke="#6a6a6a" stroke-width="1" />
<line x1="831.5" y1="121" x2="831.5" y2="526" stroke="#d6d6d6" stroke-width="1" />
<line x1="178.5" y1="121" x2="178.5" y2="526" stroke="#dcdcdc" stroke-width="1" />
<line x1="250" y1="148.5" x2="760" y2="148.5" stroke="#e6e6e6" stroke-width="1" />
<text x="255.60" y="158.20" font-family="Liberation Mono" font-size="10.13" fill="#2f2ff2" xml:space="preserve">#ifndef VIGENERE_H</text>
<text x="255.60" y="169.68" font-family="Liberation Mono" font-size="10.13" fill="#2f2ff2" xml:space="preserve">#define VIGENERE_H</text>
<text x="255.60" y="192.64" font-family="Liberation Mono" font-size="10.13" fill="#2f2ff2" xml:space="preserve">#include </text>
<text x="310.32" y="192.64" font-family="Liberation Mono" font-size="10.13" fill="#a82424" xml:space="preserve">&lt;string&gt;</text>
<text x="255.60" y="215.60" font-family="Liberation Mono" font-size="10.13" fill="#2f2ff2" xml:space="preserve">using namespace </text>
<text x="352.88" y="215.60" font-family="Liberation Mono" font-size="10.13" fill="#3a3a3a" xml:space="preserve">std;</text>
<text x="255.60" y="238.56" font-family="Liberation Mono" font-size="10.13" fill="#2f2ff2" xml:space="preserve">class </text>
<text x="292.08" y="238.56" font-family="Liberation Mono" font-size="10.13" fill="#3a3a3a" xml:space="preserve">Vigenere</text>
<text x="255.60" y="250.04" font-family="Liberation Mono" font-size="10.13" fill="#3a3a3a" xml:space="preserve">{</text>
<text x="255.60" y="261.52" font-family="Liberation Mono" font-size="10.13" fill="#2f2ff2" xml:space="preserve">public</text>
<text x="292.08" y="261.52" font-family="Liberation Mono" font-size="10.13" fill="#3a3a3a" xml:space="preserve">:</text>
<text x="294.60" y="273.00" font-family="Liberation Mono" font-size="10.13" fill="#3a3a3a" xml:space="preserve">Vigenere(</text>
<text x="349.32" y="273.00" font-family="Liberation Mono" font-size="10.13" fill="#2f2ff2" xml:space="preserve">const</text>
<text x="379.72" y="273.00" font-family="Liberation Mono" font-size="10.13" fill="#3a3a3a" xml:space="preserve"> string &amp; k = </text>
<text x="464.84" y="273.00" font-family="Liberation Mono" font-size="10.13" fill="#a82424" xml:space="preserve">"lemon"</text>
<text x="507.40" y="273.00" font-family="Liberation Mono" font-size="10.13" fill="#3a3a3a" xml:space="preserve">);</text>
<text x="294.60" y="295.96" font-family="Liberation Mono" font-size="10.13" fill="#229022" xml:space="preserve">//accessor(s)</text>
<text x="294.60" y="307.44" font-family="Liberation Mono" font-size="10.13" fill="#3a3a3a" xml:space="preserve">string getKey();</text>
<text x="294.60" y="318.92" font-family="Liberation Mono" font-size="10.13" fill="#3a3a3a" xml:space="preserve">string getDecodingKey();</text>
<text x="294.60" y="341.88" font-family="Liberation Mono" font-size="10.13" fill="#229022" xml:space="preserve">//mutator(s)</text>
<text x="294.60" y="353.36" font-family="Liberation Mono" font-size="10.13" fill="#2f2ff2" xml:space="preserve">void</text>
<text x="318.92" y="353.36" font-family="Liberation Mono" font-size="10.13" fill="#3a3a3a" xml:space="preserve"> setKey(string &amp; newKey);</text>
<text x="294.60" y="376.32" font-family="Liberation Mono" font-size="10.13" fill="#229022" xml:space="preserve">//Encoding and decoding member functions</text>
<text x="294.60" y="387.80" font-family="Liberation Mono" font-size="10.13" fill="#3a3a3a" xml:space="preserve">string encode(string &amp; message);</text>
<text x="294.60" y="399.28" font-family="Liberation Mono" font-size="10.13" fill="#3a3a3a" xml:space="preserve">string decode(string &amp; message);</text>
<text x="294.60" y="422.24" font-family="Liberation Mono" font-size="10.13" fill="#229022" xml:space="preserve">//shift letter</text>
<text x="294.60" y="433.72" font-family="Liberation Mono" font-size="10.13" fill="#2f2ff2" xml:space="preserve">char</text>
<text x="318.92" y="433.72" font-family="Liberation Mono" font-size="10.13" fill="#3a3a3a" xml:space="preserve"> shift(</text>
<text x="361.48" y="433.72" font-family="Liberation Mono" font-size="10.13" fill="#2f2ff2" xml:space="preserve">char</text>
<text x="385.80" y="433.72" font-family="Liberation Mono" font-size="10.13" fill="#3a3a3a" xml:space="preserve"> c, </text>
<text x="410.12" y="433.72" font-family="Liberation Mono" font-size="10.13" fill="#2f2ff2" xml:space="preserve">char</text>
<text x="434.44" y="433.72" font-family="Liberation Mono" font-size="10.13" fill="#3a3a3a" xml:space="preserve"> codeLetter);</text>
<text x="255.60" y="456.68" font-family="Liberation Mono" font-size="10.13" fill="#2f2ff2" xml:space="preserve">private</text>
<text x="298.16" y="456.68" font-family="Liberation Mono" font-size="10.13" fill="#3a3a3a" xml:space="preserve">:</text>
<text x="294.60" y="468.16" font-family="Liberation Mono" font-size="10.13" fill="#3a3a3a" xml:space="preserve">string key;</text>
<text x="294.60" y="479.64" font-family="Liberation Mono" font-size="10.13" fill="#229022" xml:space="preserve">//internal function (private)</text>
<text x="294.60" y="491.12" font-family="Liberation Mono" font-size="10.13" fill="#3a3a3a" xml:space="preserve">string cipher(string &amp; message, string &amp; code);</text>
<text x="255.60" y="502.60" font-family="Liberation Mono" font-size="10.13" fill="#3a3a3a" xml:space="preserve">};</text>
<text x="255.60" y="514.08" font-family="Liberation Mono" font-size="10.13" fill="#2f2ff2" xml:space="preserve">#endif</text>
<g transform="translate(0,0.8)">
<path d="M261.68 159.5 L263.18 158.2 L264.68 159.5 L266.18 158.2 L267.68 159.5 L269.18 158.2 L270.68 159.5 L272.18 158.2 L273.68 159.5 L275.18 158.2 L276.68 159.5 L278.18 158.2 L279.68 159.5 L281.18 158.2 L282.68 159.5 L284.18 158.2 L285.68 159.5 L287.18 158.2 L288.68 159.5 L290.18 158.2 L291.68 159.5 L293.18 158.2 L294.68 159.5 L296.18 158.2 L297.68 159.5 L299.18 158.2" fill="none" stroke="#e03030" stroke-width="0.8" />
<path d="M292.08 239.5 L293.58 238.2 L295.08 239.5 L296.58 238.2 L298.08 239.5 L299.58 238.2 L301.08 239.5 L302.58 238.2 L304.08 239.5 L305.58 238.2 L307.08 239.5 L308.58 238.2 L310.08 239.5 L311.58 238.2 L313.08 239.5 L314.58 238.2 L316.08 239.5 L317.58 238.2 L319.08 239.5 L320.58 238.2 L322.08 239.5 L323.58 238.2 L325.08 239.5 L326.58 238.2 L328.08 239.5 L329.58 238.2 L331.08 239.5 L332.58 238.2 L334.08 239.5 L335.58 238.2 L337.08 239.5 L338.58 238.2 L340.08 239.5 L341.58 238.2" fill="none" stroke="#e03030" stroke-width="0.8" />
<path d="M294.6 274 L296.10 272.7 L297.60 274 L299.10 272.7 L300.60 274 L302.10 272.7 L303.60 274 L305.10 272.7 L306.60 274 L308.10 272.7 L309.60 274 L311.10 272.7 L312.60 274 L314.10 272.7 L315.60 274 L317.10 272.7 L318.60 274 L320.10 272.7 L321.60 274 L323.10 272.7 L324.60 274 L326.10 272.7 L327.60 274 L329.10 272.7 L330.60 274 L332.10 272.7 L333.60 274 L335.10 272.7 L336.60 274 L338.10 272.7 L339.60 274 L341.10 272.7 L342.60 274 L344.10 272.7" fill="none" stroke="#e03030" stroke-width="0.8" />
<line x1="343.24" y1="274.5" x2="349.32000000000005" y2="274.5" stroke="#3a78c4" stroke-width="0.8" />
<path d="M337.16 308.5 L338.66 307.2 L340.16 308.5 L341.66 307.2 L343.16 308.5 L344.66 307.2 L346.16 308.5 L347.66 307.2 L349.16 308.5 L350.66 307.2 L352.16 308.5 L353.66 307.2 L355.16 308.5 L356.66 307.2 L358.16 308.5 L359.66 307.2 L361.16 308.5 L362.66 307.2 L364.16 308.5 L365.66 307.2 L367.16 308.5 L368.66 307.2 L370.16 308.5 L371.66 307.2 L373.16 308.5 L374.66 307.2" fill="none" stroke="#e03030" stroke-width="0.8" />
<line x1="373.64000000000004" y1="308.5" x2="379.72" y2="308.5" stroke="#3a78c4" stroke-width="0.8" />
<path d="M337.16 320 L338.66 318.7 L340.16 320 L341.66 318.7 L343.16 320 L344.66 318.7 L346.16 320 L347.66 318.7 L349.16 320 L350.66 318.7 L352.16 320 L353.66 318.7 L355.16 320 L356.66 318.7 L358.16 320 L359.66 318.7 L361.16 320 L362.66 318.7 L364.16 320 L365.66 318.7 L367.16 320 L368.66 318.7 L370.16 320 L371.66 318.7 L373.16 320 L374.66 318.7 L376.16 320 L377.66 318.7 L379.16 320 L380.66 318.7 L382.16 320 L383.66 318.7 L385.16 320 L386.66 318.7 L388.16 320 L389.66 318.7 L391.16 320 L392.66 318.7 L394.16 320 L395.66 318.7 L397.16 320 L398.66 318.7 L400.16 320 L401.66 318.7 L403.16 320 L404.66 318.7 L406.16 320 L407.66 318.7 L409.16 320 L410.66 318.7 L412.16 320 L413.66 318.7 L415.16 320 L416.66 318.7 L418.16 320 L419.66 318.7 L421.16 320 L422.66 318.7" fill="none" stroke="#e03030" stroke-width="0.8" />
<line x1="422.28000000000003" y1="320" x2="428.36" y2="320" stroke="#3a78c4" stroke-width="0.8" />
<path d="M325.0 354.5 L326.50 353.2 L328.00 354.5 L329.50 353.2 L331.00 354.5 L332.50 353.2 L334.00 354.5 L335.50 353.2 L337.00 354.5 L338.50 353.2 L340.00 354.5 L341.50 353.2 L343.00 354.5 L344.50 353.2 L346.00 354.5 L347.50 353.2 L349.00 354.5 L350.50 353.2 L352.00 354.5 L353.50 353.2 L355.00 354.5 L356.50 353.2 L358.00 354.5 L359.50 353.2 L361.00 354.5 L362.50 353.2" fill="none" stroke="#e03030" stroke-width="0.8" />
<line x1="361.48" y1="354.5" x2="367.56000000000006" y2="354.5" stroke="#3a78c4" stroke-width="0.8" />
<path d="M422.28000000000003 354.5 L423.78 353.2 L425.28 354.5 L426.78 353.2 L428.28 354.5 L429.78 353.2 L431.28 354.5 L432.78 353.2 L434.28 354.5 L435.78 353.2 L437.28 354.5 L438.78 353.2 L440.28 354.5 L441.78 353.2 L443.28 354.5 L444.78 353.2 L446.28 354.5 L447.78 353.2 L449.28 354.5 L450.78 353.2 L452.28 354.5 L453.78 353.2 L455.28 354.5 L456.78 353.2 L458.28 354.5 L459.78 353.2" fill="none" stroke="#e03030" stroke-width="0.8" />
<line x1="337.16" y1="388.5" x2="379.72" y2="388.5" stroke="#3a78c4" stroke-width="0.8" />
<line x1="337.16" y1="400" x2="379.72" y2="400" stroke="#3a78c4" stroke-width="0.8" />
<line x1="325.0" y1="434.5" x2="361.48" y2="434.5" stroke="#3a78c4" stroke-width="0.8" />
<path d="M440.52000000000004 434.5 L442.02 433.2 L443.52 434.5 L445.02 433.2 L446.52 434.5 L448.02 433.2 L449.52 434.5 L451.02 433.2 L452.52 434.5 L454.02 433.2 L455.52 434.5 L457.02 433.2 L458.52 434.5 L460.02 433.2 L461.52 434.5 L463.02 433.2 L464.52 434.5 L466.02 433.2 L467.52 434.5 L469.02 433.2 L470.52 434.5 L472.02 433.2 L473.52 434.5 L475.02 433.2 L476.52 434.5 L478.02 433.2 L479.52 434.5 L481.02 433.2 L482.52 434.5 L484.02 433.2 L485.52 434.5 L487.02 433.2 L488.52 434.5 L490.02 433.2 L491.52 434.5 L493.02 433.2 L494.52 434.5 L496.02 433.2 L497.52 434.5 L499.02 433.2 L500.52 434.5 L502.02 433.2" fill="none" stroke="#e03030" stroke-width="0.8" />
<line x1="337.16" y1="492" x2="379.72" y2="492" stroke="#3a78c4" stroke-width="0.8" />
<line x1="488.66" y1="378.5" x2="488.66" y2="389.5" stroke="#222" stroke-width="0.8" />
</g>
<rect x="1010" y="120" width="14" height="406" fill="#dcdcdc" />
<rect x="1010.5" y="122" width="12.5" height="12.5" fill="#fdfdfd" />
<path d="M1014 130 L1016.75 127 L1019.5 130 Z" fill="#555" stroke="none" stroke-width="1" />
<rect x="1010.5" y="312.5" width="13" height="60" fill="#f0f0f0" stroke="#c8c8c8" stroke-width="0.6"/>
<rect x="1010.5" y="512.5" width="12.5" height="12" fill="#fdfdfd" />
<path d="M1014 517 L1016.75 520 L1019.5 517 Z" fill="#555" stroke="none" stroke-width="1" />
<text x="4.80" y="537.70" font-family="Liberation Sans" font-size="7.86" fill="#444" stroke="#444" stroke-width="0.14" font-weight="normal" font-style="normal" textLength="40.70" lengthAdjust="spacingAndGlyphs" xml:space="preserve">Page 2 of 3</text>
<text x="56.75" y="537.70" font-family="Liberation Sans" font-size="7.86" fill="#444" stroke="#444" stroke-width="0.14" font-weight="normal" font-style="normal" textLength="39.00" lengthAdjust="spacingAndGlyphs" xml:space="preserve">457 words</text>
<rect x="108" y="531" width="10" height="8" fill="none" stroke="#666" stroke-width="0.8"/>
<line x1="112" y1="531" x2="112" y2="539" stroke="#666" stroke-width="0.8" />
<path d="M114 533 L117 537 M117 533 L114 537" fill="none" stroke="#666" stroke-width="0.8" />
<line x1="831" y1="530.5" x2="831" y2="539.5" stroke="#888" stroke-width="0.8" />
<line x1="826.5" y1="531.5" x2="830.0" y2="531.5" stroke="#777" stroke-width="0.9" />
<line x1="826.5" y1="534.0" x2="830.0" y2="534.0" stroke="#777" stroke-width="0.9" />
<line x1="826.5" y1="536.5" x2="830.0" y2="536.5" stroke="#777" stroke-width="0.9" />
<line x1="826.5" y1="539.0" x2="830.0" y2="539.0" stroke="#777" stroke-width="0.9" />
<line x1="832.5" y1="531.5" x2="836.0" y2="531.5" stroke="#777" stroke-width="0.9" />
<line x1="832.5" y1="534.0" x2="836.0" y2="534.0" stroke="#777" stroke-width="0.9" />
<line x1="832.5" y1="536.5" x2="836.0" y2="536.5" stroke="#777" stroke-width="0.9" />
<line x1="832.5" y1="539.0" x2="836.0" y2="539.0" stroke="#777" stroke-width="0.9" />
<rect x="843" y="527" width="23.25" height="17" fill="#d2d2d2" />
<rect x="849.5" y="530.5" width="9.5" height="9.5" fill="none" stroke="#555" stroke-width="0.9"/>
<line x1="851.5" y1="532.5" x2="857.0" y2="532.5" stroke="#666" stroke-width="0.7" />
<line x1="851.5" y1="534.5" x2="857.0" y2="534.5" stroke="#666" stroke-width="0.7" />
<line x1="851.5" y1="536.5" x2="857.0" y2="536.5" stroke="#666" stroke-width="0.7" />
<line x1="851.5" y1="538.5" x2="857.0" y2="538.5" stroke="#666" stroke-width="0.7" />
<rect x="874.5" y="530.5" width="9" height="9" fill="none" stroke="#777" stroke-width="0.8"/>
<line x1="876.5" y1="533" x2="881.5" y2="533" stroke="#888" stroke-width="0.7" />
<line x1="876.5" y1="535" x2="881.5" y2="535" stroke="#888" stroke-width="0.7" />
<circle cx="883" cy="538.5" r="2.3" fill="#777"/>
<line x1="894.25" y1="535" x2="899.75" y2="535" stroke="#555" stroke-width="1.1" />
<line x1="903" y1="535" x2="981.75" y2="535" stroke="#b8b8b8" stroke-width="1" />
<rect x="941" y="530.5" width="4" height="9" fill="#666" />
<line x1="985.5" y1="535" x2="991" y2="535" stroke="#555" stroke-width="1.1" />
<line x1="988.25" y1="532.25" x2="988.25" y2="537.75" stroke="#555" stroke-width="1.1" />
<text x="998.50" y="537.70" font-family="Liberation Sans" font-size="7.86" fill="#444" stroke="#444" stroke-width="0.14" font-weight="normal" font-style="normal" textLength="20.75" lengthAdjust="spacingAndGlyphs" xml:space="preserve">100%</text>
<defs><linearGradient id="sg" x1="0" x2="1"><stop offset="0" stop-color="#1d2a2e"/><stop offset="1" stop-color="#2a241f"/></linearGradient></defs>
<rect x="0" y="544" width="38" height="32" fill="url(#sg)" />
<rect x="38" y="544" width="276" height="32" fill="#f0f0f0" />
<path d="M13.5 554.5 L18 553.9 V559.6 H13.5 Z M19 553.8 L24.5 553 V559.6 H19 Z M13.5 560.6 H18 V566.3 L13.5 565.7 Z M19 560.6 H24.5 V567.2 L19 566.4 Z" fill="#fff" stroke="none" stroke-width="1" />
<circle cx="54.1" cy="559.6" r="7.3" fill="none" stroke="#111" stroke-width="2"/>
<text x="71.25" y="564.30" font-family="Liberation Sans" font-size="10.14" fill="#333" font-weight="normal" font-style="normal" textLength="95.00" lengthAdjust="spacingAndGlyphs" xml:space="preserve">Type here to search</text>
<rect x="295" y="553" width="5.5" height="9" rx="2.7" fill="none" stroke="#444" stroke-width="1"/>
<path d="M293 559 Q293 565 297.75 565 Q302.5 565 302.5 559 M297.75 565 V568" fill="none" stroke="#444" stroke-width="1" />
<g stroke="#fff" stroke-width="1" fill="none"><path d="M326.5 554 V566.5 M333.5 554 V566.5 M326.5 555 H333.5 M326.5 564.5 H333.5 M338.5 553.5 V566.5"/></g>
<path d="M368.5 559.8 H380.3 A6.3 6.3 0 1 0 378.5 565.6" fill="none" stroke="#1a86d9" stroke-width="3.2" />
<path d="M366.5 557.5 Q369 552 375 552.2" fill="none" stroke="#1a86d9" stroke-width="2" />
<path d="M405 553 H411 L413 555 H422 V567.5 H405 Z" fill="#f5c846" stroke="none" stroke-width="1" />
<rect x="405" y="557" width="17.25" height="10.5" fill="#ffe38a" />
<rect x="409.5" y="560" width="8" height="7.5" fill="#2b8de0" />
<rect x="411" y="562.5" width="5" height="5" fill="#ffe38a" />
<rect x="398" y="574" width="31.75" height="2" fill="#7fb7f0" />
<path d="M444 555 H463 V568.5 H444 Z" fill="#fff" stroke="none" stroke-width="1" />
<path d="M450 555 Q450 550.5 453.5 550.5 Q457 550.5 457 555" fill="none" stroke="#fff" stroke-width="1.1" />
<rect x="449.5" y="558" width="4" height="3.6" fill="#f25022" />
<rect x="454" y="558" width="4" height="3.6" fill="#7fba00" />
<rect x="449.5" y="562" width="4" height="3.6" fill="#00a4ef" />
<rect x="454" y="562" width="4" height="3.6" fill="#ffb900" />
<path d="M484 556 L494 551 L503.5 556 V567.5 H484 Z" fill="#fff" stroke="none" stroke-width="1" />
<path d="M485 556.5 L502.5 557 L498.5 563 Z" fill="#15120f" stroke="none" stroke-width="1" />
<circle cx="504" cy="566" r="6.3" fill="#333" stroke="#15120f" stroke-width="1"/>
<text x="501.80" y="569.20" font-family="Liberation Sans" font-size="8.57" fill="#fff" font-weight="bold" font-style="normal" textLength="4.40" lengthAdjust="spacingAndGlyphs" xml:space="preserve">2</text>
<rect x="478" y="574" width="32" height="2" fill="#7fb7f0" />
<circle cx="533.75" cy="559.6" r="8.8" fill="#db4437"/>
<path d="M533.75 559.6 L541.37 555.20 A8.8 8.8 0 0 1 533.75 568.40 Z" fill="#ffcd40" stroke="none" stroke-width="1" />
<path d="M533.75 559.6 L533.75 568.40 A8.8 8.8 0 0 1 526.13 555.20 Z" fill="#0f9d58" stroke="none" stroke-width="1" />
<circle cx="533.75" cy="559.6" r="3.9" fill="#fff"/><circle cx="533.75" cy="559.6" r="3" fill="#4285f4"/>
<rect x="518" y="574" width="32" height="2" fill="#7fb7f0" />
<circle cx="573.6" cy="559.6" r="9.6" fill="#3e9a3a"/>
<rect x="567.5" y="554" width="12" height="8" fill="none" stroke="#e8f5e8" stroke-width="0.9"/>
<line x1="573.5" y1="562" x2="573.5" y2="566" stroke="#e8f5e8" stroke-width="0.9" />
<line x1="570" y1="566" x2="577" y2="566" stroke="#e8f5e8" stroke-width="0.9" />
<rect x="558" y="574" width="32" height="2" fill="#7fb7f0" />
<rect x="595" y="544" width="35.75" height="32" fill="#3c3c3c" />
<rect x="611" y="552.5" width="11.5" height="14.5" fill="#fff" />
<line x1="614" y1="555.5" x2="621" y2="555.5" stroke="#2b579a" stroke-width="1.1" />
<line x1="614" y1="558.1" x2="621" y2="558.1" stroke="#2b579a" stroke-width="1.1" />
<line x1="614" y1="560.7" x2="621" y2="560.7" stroke="#2b579a" stroke-width="1.1" />
<line x1="614" y1="563.3" x2="621" y2="563.3" stroke="#2b579a" stroke-width="1.1" />
<rect x="605" y="553" width="12" height="13" fill="#2b579a" />
<text x="605.80" y="563.00" font-family="Liberation Sans" font-size="9.71" fill="#fff" font-weight="bold" font-style="normal" textLength="10.40" lengthAdjust="spacingAndGlyphs" xml:space="preserve">W</text>
<rect x="595" y="574" width="35.75" height="2" fill="#99c9ff" />
<rect x="652" y="552" width="10.5" height="15" fill="#fff" />
<path d="M653 554 V565 H662" fill="none" stroke="#d24726" stroke-width="1.2" />
<path d="M645 553.5 L657 551.5 V568 L645 566 Z" fill="#d24726" stroke="none" stroke-width="1" />
<text x="647.20" y="563.20" font-family="Liberation Sans" font-size="9.29" fill="#fff" font-weight="bold" font-style="normal" textLength="6.60" lengthAdjust="spacingAndGlyphs" xml:space="preserve">P</text>
<rect x="638" y="574" width="32" height="2" fill="#7fb7f0" />
<rect x="684" y="550.5" width="19.25" height="19" fill="#0a0a0a" />
<text x="689.00" y="566.00" font-family="Liberation Sans" font-size="14.29" fill="#e50914" font-weight="bold" font-style="normal" textLength="9.00" lengthAdjust="spacingAndGlyphs" xml:space="preserve">N</text>
<rect x="678" y="574" width="32" height="2" fill="#7fb7f0" />
<path d="M724.5 552 L733.25 555 L742 552 V565 L733.25 569.5 L724.5 565 Z" fill="#c01818" stroke="none" stroke-width="1" />
<path d="M727.5 556 V563.5 L733.25 566.5 L739 563.5 V556 L733.25 559 Z" fill="#15120f" stroke="none" stroke-width="1" />
<rect x="718" y="574" width="32" height="2" fill="#7fb7f0" />
<g stroke="#fff" stroke-width="1" fill="none">
<circle cx="803" cy="557.5" r="2.2"/><path d="M799 566 Q799 561.5 803 561.5 Q806 561.5 806.5 564"/>
<circle cx="807.5" cy="555.3" r="1.8"/><path d="M805 560.5 Q806 558.5 808 558.5 Q810.5 558.5 810.5 562"/>
<path d="M832 562.5 L836.4 557 L840.8 562.5" fill="none" stroke="#fff" stroke-width="1" />
</g>
<rect x="855.5" y="557.5" width="12.5" height="6.25" fill="#fff" />
<rect x="862" y="558.5" width="5" height="4.25" fill="#15120f" />
<path d="M881 563.75 Q880.5 559.5 884.5 559.5 Q886 555.5 890 556.5 Q893 557 893 559.5 Q895 560 894.25 563.75 Z" fill="#fff" stroke="none" stroke-width="1" />
<path d="M907 558.5 H909.5 L912.5 555.5 V566 L909.5 563 H907 Z" fill="none" stroke="#fff" stroke-width="0.9" />
<path d="M914 558.5 L918 562.5 M918 558.5 L914 562.5" fill="none" stroke="#fff" stroke-width="0.9" />
<text x="935.00" y="556.30" font-family="Liberation Sans" font-size="10.00" fill="#fff" font-weight="normal" font-style="normal" textLength="36.00" lengthAdjust="spacingAndGlyphs" xml:space="preserve">9:12 AM</text>
<text x="931.75" y="570.50" font-family="Liberation Sans" font-size="10.00" fill="#fff" font-weight="normal" font-style="normal" textLength="44.25" lengthAdjust="spacingAndGlyphs" xml:space="preserve">8/28/2018</text>
<path d="M990.5 553.75 H1004.25 V563.5 H996 L992.5 567 V563.5 H990.5 Z" fill="#fff" stroke="none" stroke-width="1" />
<line x1="993" y1="557.0" x2="1002" y2="557.0" stroke="#333" stroke-width="0.8" />
<line x1="993" y1="559.5" x2="1002" y2="559.5" stroke="#333" stroke-width="0.8" />
<circle cx="1003.4" cy="566.3" r="6" fill="#2c2c2c" stroke="#555" stroke-width="0.6"/>
<text x="1001.00" y="569.60" font-family="Liberation Sans" font-size="8.57" fill="#fff" stroke="#fff" stroke-width="0.14" font-weight="normal" font-style="normal" textLength="4.80" lengthAdjust="spacingAndGlyphs" xml:space="preserve">3</text>
</svg>
</body></html>
